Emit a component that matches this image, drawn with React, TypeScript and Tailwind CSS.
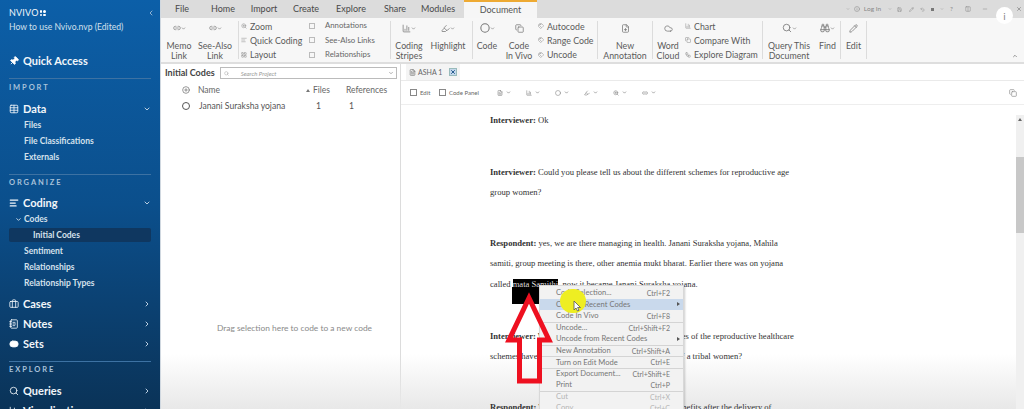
import React from "react";
import { ChevronDown, ChevronRight, ChevronLeft, ChevronUp, Pin, Table, AlignLeft, Briefcase, NotebookText, ToggleRight, Search, Pencil, Highlighter, Circle, FileText, FilePlus, Cloud, Binoculars, Copy, Link2, BarChart3, ZoomIn, LayoutGrid, Save, Undo2, Minus, X, CirclePlus, Info, Workflow, Tags, Columns2 } from "lucide-react";

const sans = "font-['Lato','Open_Sans',sans-serif]";

function SideHead({ t, pt, pb }: { t: string; pt: string; pb: string }) {
  return (
    <div className={`mx-[9px] border-t border-[#3d72a3] ${pt} ${pb} text-[7.5px] font-bold tracking-[1.9px] text-[#a9c2da] leading-[10px]`}>{t}</div>
  );
}
function SideMain({ icon, t, open }: { icon: React.ReactNode; t: string; open?: boolean }) {
  return (
    <div className="flex items-center h-[20px] pl-[9px] pr-[9px] text-[#f2f6fa] text-[11px] font-bold">
      <span className="w-[14px] flex">{icon}</span>
      <span className="flex-1">{t}</span>
      {open ? <ChevronDown size={8} strokeWidth={3} className="text-[#b9cde0]" /> : <ChevronRight size={8} strokeWidth={3} className="text-[#b9cde0]" />}
    </div>
  );
}
function SideSub({ t, first }: { t: string; first?: boolean }) {
  return <div className={`h-[16px] pl-[24px] text-[8.5px] font-bold leading-[16px] text-[#d5e1ec] ${first ? "-mt-[2px]" : ""}`}>{t}</div>;
}
function Tab({ t, w }: { t: string; w: string }) {
  return <div className={`${w} text-center text-[9px] leading-[18px] text-[#4a4a4a]`}>{t}</div>;
}
function Big({ icon, a, b, w, caret = true }: { icon: React.ReactNode; a: string; b?: string; w: string; caret?: boolean }) {
  return (
    <div className={`${w} shrink-0 flex flex-col items-center text-[8.8px] leading-[10px] text-[#5a5a5a] whitespace-nowrap`}>
      <div className="h-[23px] pb-[3px] flex items-center text-[#777]">{icon}{caret && <ChevronDown size={5} strokeWidth={3} />}</div>
      <div className="h-[10px]">{a}</div>
      <div className="h-[10px]">{b}</div>
    </div>
  );
}
function Small({ icon, t }: { icon: React.ReactNode; t: string }) {
  return <div className="flex items-center gap-[2px] h-[14.3px] text-[8.8px] whitespace-nowrap text-[#5a5a5a]"><span className="text-[#8a8a8a] flex w-[7px]">{icon}</span>{t}</div>;
}
function Check({ t }: { t: string }) {
  return <div className="flex items-center gap-[10px] h-[14.3px] text-[7.8px] whitespace-nowrap text-[#666]"><span className="w-[6px] h-[6px] border border-[#bbb]" />{t}</div>;
}
const Sep = () => <div className="w-px h-[38px] mt-[3px] shrink-0 bg-[#dcdcdc]" />;

function Tool({ icon }: { icon: React.ReactNode }) {
  return <div className="flex items-center gap-[3px] text-[#777]">{icon}<ChevronDown size={5} strokeWidth={3} /></div>;
}

function Item({ t, k, dim, arrow, active, line }: { t: string; k?: string; dim?: boolean; arrow?: boolean; active?: boolean; line?: boolean }) {
  return (
    <div className={`relative flex items-center justify-between h-[11.5px] pl-[16px] pr-[13px] text-[7.6px] whitespace-nowrap ${active ? "bg-[#c9d9ec]" : ""} ${line ? "border-t border-[#d4d4d4]" : ""} ${dim ? "text-[#b5b5b5]" : "text-[#777]"}`}>
      <span>{t}</span>
      <span className="text-[7px]">{k}</span>
      {arrow && <span className="absolute right-[3px] w-0 h-0 border-y-[2px] border-y-transparent border-l-[3px] border-l-[#555]" />}
    </div>
  );
}

export default function App() {
  return (
    <div className={`relative flex w-[1024px] h-[409px] overflow-hidden bg-white ${sans}`}>
      <aside className="w-[161px] shrink-0 h-full overflow-hidden bg-gradient-to-b from-[#0c5fa8] via-[#0b4f8c] to-[#0a3358] border-r border-[#d0d8e0]">
        <div className="flex items-center justify-between pl-[9px] pr-[5px] pt-[7px] h-[19px]">
          <div className="flex items-center text-[#f2f6fa] text-[9px] tracking-[0.2px] leading-[10px]">NVIVO
            <span className="ml-[1px] grid grid-cols-2 gap-[1px]">
              <span className="w-[2.5px] h-[2.5px] bg-white rounded-full" /><span className="w-[2.5px] h-[2.5px] bg-white rounded-full" />
              <span className="w-[2.5px] h-[2.5px] bg-white rounded-full" /><span className="w-[2.5px] h-[2.5px] bg-white rounded-full" />
            </span>
          </div>
          <ChevronLeft size={8} strokeWidth={2.5} className="text-[#a9c2da]" />
        </div>
        <div className="pl-[9px] mt-[2px] h-[30px] text-[8.6px] leading-[12px] text-[#d3e0ec]">How to use Nvivo.nvp (Edited)</div>
        <div className="flex items-center h-[20px] pl-[9px] text-[#f2f6fa] text-[11px] font-bold"><Pin size={10} fill="white" className="rotate-45 mr-[4px]" />Quick Access</div>
        <div className="h-[7px]" />
        <SideHead t="IMPORT" pt="pt-[4px]" pb="pb-[6px]" />
        <SideMain icon={<Table size={10} />} t="Data" open />
        <SideSub t="Files" first />
        <SideSub t="File Classifications" />
        <SideSub t="Externals" />
        <div className="h-[9px]" />
        <SideHead t="ORGANIZE" pt="pt-[3px]" pb="pb-[5px]" />
        <SideMain icon={<AlignLeft size={10} strokeWidth={3} />} t="Coding" open />
        <div className="flex items-center h-[16px] -mt-[2px] pl-[15px] text-[8.5px] font-bold text-[#d5e1ec]"><ChevronDown size={7} strokeWidth={3} className="mr-[2px]" />Codes</div>
        <div className="flex items-center h-[16px] mx-[9px] pl-[24px]">
          <div className="-ml-[24px] pl-[24px] w-[144px] h-[14px] rounded-[2px] bg-[#0f3760] text-[8.5px] font-bold leading-[14px] text-[#d5e1ec]">Initial Codes</div>
        </div>
        <SideSub t="Sentiment" />
        <SideSub t="Relationships" />
        <SideSub t="Relationship Types" />
        <div className="h-[3px]" />
        <SideMain icon={<Briefcase size={10} />} t="Cases" />
        <SideMain icon={<NotebookText size={10} />} t="Notes" />
        <SideMain icon={<ToggleRight size={10} fill="white" />} t="Sets" />
        <div className="h-[7px]" />
        <SideHead t="EXPLORE" pt="pt-[3px]" pb="pb-[6px]" />
        <SideMain icon={<Search size={10} />} t="Queries" />
        <SideMain icon={<BarChart3 size={10} />} t="Visualizations" />
      </aside>

      <main className="relative flex-1 min-w-0 flex flex-col">
        <div className="flex items-center h-[18px] bg-[#dcdcdc] pl-[1px]">
          <Tab t="File" w="w-[40px]" />
          <Tab t="Home" w="w-[42px]" />
          <Tab t="Import" w="w-[40px]" />
          <Tab t="Create" w="w-[44px]" />
          <Tab t="Explore" w="w-[46px]" />
          <Tab t="Share" w="w-[42px]" />
          <Tab t="Modules" w="w-[44px]" />
          <div className="ml-[4px] w-[73px] h-[18px] bg-[#f6f6f6] border-t-[2px] border-[#eeaa33] text-center text-[9px] leading-[15px] text-[#555]">Document</div>
          <div className="ml-auto flex items-center pr-[2px] text-[#888] text-[6.5px]">
            <ChevronDown size={4} />
            <Info size={6} className="ml-[4px]" />
            <span className="ml-[4px]">Log In</span>
            <ChevronDown size={4} className="ml-[7px]" />
            <Save size={5} className="ml-[5px]" />
            <Pencil size={5} className="ml-[7px]" />
            <Undo2 size={5} className="ml-[6px]" />
            <span className="ml-[6px] w-[3px] h-[3px] bg-[#777]" />
            <ChevronDown size={4} className="ml-[6px]" />
            <span className="ml-[6px]">?</span>
            <Columns2 size={6} className="ml-[12px]" />
            <Minus size={6} className="ml-[11px]" />
            <span className="w-[28px]" />
            <X size={6} strokeWidth={3} />
          </div>
        </div>

        <div className="relative flex h-[44px] bg-[#f7f7f7]">
          <Big w="w-[36px]" icon={<Link2 size={8} />} a="Memo" b="Link" />
          <Big w="w-[36px]" icon={<Link2 size={8} />} a="See-Also" b="Link" />
          <div className="w-[5px] shrink-0" />
          <Sep />
          <div className="w-[70px] shrink-0 pl-[2px] pt-[1px]">
            <Small icon={<ZoomIn size={6} />} t="Zoom" />
            <Small icon={<AlignLeft size={6} />} t="Quick Coding" />
            <Small icon={<LayoutGrid size={6} />} t="Layout" />
          </div>
          <div className="w-[81px] shrink-0 pt-[1px]">
            <Check t="Annotations" /><Check t="See-Also Links" /><Check t="Relationships" />
          </div>
          <Sep />
          <Big w="w-[36px]" icon={<BarChart3 size={9} />} a="Coding" b="Stripes" />
          <Big w="w-[42px]" icon={<Highlighter size={9} />} a="Highlight" />
          <div className="w-[3px] shrink-0" />
          <Sep />
          <Big w="w-[28px]" icon={<Circle size={10} strokeWidth={2.5} />} a="Code" />
          <Big w="w-[36px]" icon={<Copy size={9} />} a="Code" b="In Vivo" caret={false} />
          <div className="w-[60px] shrink-0 pl-[1px] pt-[1px]">
            <Small icon={<Tags size={6} />} t="Autocode" />
            <Small icon={<Tags size={6} />} t="Range Code" />
            <Small icon={<Tags size={6} />} t="Uncode" />
          </div>
          <Sep />
          <Big w="w-[54px]" icon={<FilePlus size={9} />} a="New" b="Annotation" caret={false} />
          <Sep />
          <Big w="w-[30px]" icon={<Cloud size={9} />} a="Word" b="Cloud" caret={false} />
          <div className="w-[79px] shrink-0 pl-[2px] pt-[1px]">
            <Small icon={<BarChart3 size={6} />} t="Chart" />
            <Small icon={<Copy size={6} />} t="Compare With" />
            <Small icon={<Workflow size={6} />} t="Explore Diagram" />
          </div>
          <Sep />
          <Big w="w-[52px]" icon={<Search size={10} />} a="Query This" b="Document" />
          <Big w="w-[25px]" icon={<Binoculars size={10} />} a="Find" />
          <Sep />
          <Big w="w-[25px]" icon={<Pencil size={9} />} a="Edit" caret={false} />
          <Sep />
          <ChevronUp size={6} strokeWidth={3} className="absolute right-[6px] bottom-[3px] text-[#777]" />
        </div>
        <div className="h-[2px] bg-[#dedede]" />

        <div className="flex-1 min-h-0 flex">
          <section className="w-[240px] shrink-0 border-r border-[#dcdcdc] flex flex-col">
            <div className="flex items-center h-[18px] pl-[4px] pr-[3px] gap-[5px]">
              <span className="text-[9px] font-bold text-[#444] whitespace-nowrap">Initial Codes</span>
              <div className="flex-1 h-[12px] border border-[#bbb] flex items-center pl-[3px] text-[#999]">
                <Search size={5} />
                <span className="ml-[12px] italic text-[6px]">Search Project</span>
                <ChevronDown size={6} className="ml-auto mr-[2px] text-[#666]" />
              </div>
            </div>
            <div className="flex items-center h-[14px] mt-[1px] text-[8.5px] text-[#666]">
              <CirclePlus size={8} className="ml-[21px]" />
              <span className="ml-[8px] w-[108px]">Name</span>
              <span className="w-[4px] h-0 border-x-[2px] border-x-transparent border-b-[3px] border-b-[#777] mr-[3px]" />
              <span className="w-[33px]">Files</span>
              <span>References</span>
            </div>
            <div className="flex items-center h-[18px] text-[8.6px] text-[#555]">
              <span className="ml-[21px] w-[8px] h-[8px] rounded-full border border-[#555]" />
              <span className="ml-[9px] w-[117px] whitespace-nowrap">Janani Suraksha yojana</span>
              <span className="w-[33px]">1</span>
              <span>1</span>
            </div>
            <div className="flex-1 flex items-center justify-center pt-[132px] pl-[28px] text-[8.4px] text-[#8a8a8a] whitespace-nowrap">Drag selection here to code to a new code</div>
          </section>

          <section className="relative flex-1 min-w-0 flex flex-col">
            <div className="flex items-end h-[17px] pl-[5px] border-b border-[#eaeaea]">
              <div className="flex items-center h-[16px] px-[3px] gap-[2px] bg-[#f4f4f4] text-[7px] text-[#666]">
                <FileText size={7} />ASHA 1
                <span className="ml-[5px] w-[8px] h-[8px] bg-[#c4d8ec] border border-[#9bb] flex items-center justify-center text-[#124a80]"><X size={6} strokeWidth={3.5} /></span>
              </div>
            </div>
            <div className="flex items-center h-[24px] pl-[9px] pr-[7px] border-b border-[#eeeeee] text-[6px] text-[#666]">
              <span className="w-[7px] h-[7px] border border-[#888] mr-[3px]" /><span className="w-[16px]">Edit</span>
              <span className="w-[7px] h-[7px] border border-[#888] mr-[3px] ml-[3px]" /><span className="w-[32px] whitespace-nowrap">Code Panel</span>
              <div className="flex items-center gap-[15px] ml-[16px]">
                <Tool icon={<FileText size={6} />} />
                <Tool icon={<BarChart3 size={6} />} />
                <Tool icon={<Circle size={6} />} />
                <Tool icon={<Highlighter size={6} />} />
                <Tool icon={<ZoomIn size={6} />} />
                <Tool icon={<Link2 size={6} />} />
              </div>
              <Copy size={8} className="ml-auto text-[#888]" />
            </div>
            <div className="relative z-[1] flex-1 min-h-0 overflow-hidden pl-[89px] pt-[5px] font-['Liberation_Serif',serif] text-[8.6px] leading-[20.2px] text-[#333] whitespace-nowrap">
              <p className="mb-[31.8px]"><b>Interviewer:</b> Ok</p>
              <p className="mb-[30.8px]"><b>Interviewer:</b> Could you please tell us about the different schemes for reproductive age<br />group women?</p>
              <p className="mb-[31.7px]"><b>Respondent:</b> yes, we are there managing in health. Janani Suraksha yojana, Mahila<br />samiti, group meeting is there, other anemia mukt bharat. Earlier there was on yojana<br />called <span className="bg-black text-[#ddd]">mata Samithi</span>, now it became Janani Suraksha yojana.</p>
              <p className="mb-[30.6px]"><b>Interviewer:</b> What is the overall impact of these schemes of the reproductive healthcare<br />schemes have had on the overall health and wellbeing of a tribal women?</p>
              <p><b>Respondent:</b> Women get financial support and other benefits after the delivery of</p>
            </div>

            <div className="absolute z-[2] right-0 top-[51px] bottom-0 w-[8px] bg-[#f0f0f0]">
              <div className="absolute left-[2px] top-[3px] w-0 h-0 border-x-[2px] border-x-transparent border-b-[3px] border-b-[#666]" />
              <div className="absolute left-0 top-[42px] w-[8px] h-[76px] bg-[#c8c8c8]" />
            </div>

            <div className="absolute z-10 left-[111px] top-[223px] w-[27px] h-[17px] bg-black" />

            <div className="absolute z-10 left-[138px] top-[221px] w-[145px] bg-[#f2f2f2] border border-[#d8d8d8] shadow-[1px_1px_2px_rgba(0,0,0,0.2)] pt-[1px]">
              <Item t="Code Selection..." k="Ctrl+F2" />
              <Item t="Code to Recent Codes" active arrow />
              <Item t="Code In Vivo" k="Ctrl+F8" />
              <Item t="Uncode..." k="Ctrl+Shift+F2" line />
              <Item t="Uncode from Recent Codes" arrow />
              <Item t="New Annotation" k="Ctrl+Shift+A" line />
              <Item t="Turn on Edit Mode" k="Ctrl+E" line />
              <Item t="Export Document..." k="Ctrl+Shift+E" line />
              <Item t="Print" k="Ctrl+P" />
              <Item t="Cut" k="Ctrl+X" dim line />
              <Item t="Copy" k="Ctrl+C" dim />
            </div>

            <div className="absolute z-10 left-[159px] top-[225px] w-[26px] h-[24px] rounded-full bg-[#eeee22]" />
            <svg className="absolute z-10 left-[172px] top-[236px]" width="8" height="12" viewBox="0 0 8 12"><path d="M1 1v9l2-2 1.5 3 1.5-.7L4.6 7.5H7.5z" fill="#fff" stroke="#555" strokeWidth="0.8" /></svg>
            <svg className="absolute z-10 left-[99px] top-[226px]" width="60" height="100" viewBox="0 0 60 100"><path d="M29 8 L49 50 L39.5 50 L39.5 91 L19.5 91 L19.5 50 L9 50 Z" fill="none" stroke="#ee1020" strokeWidth="5" /></svg>
          </section>
        </div>

        <div className="absolute left-0 right-0 bottom-0 h-[55px] bg-gradient-to-b from-transparent to-[#e8e8e8] pointer-events-none" />
        <div className="absolute right-[11px] top-[7px] w-[17px] h-[17px] rounded-full bg-white flex items-center justify-center text-[#888] text-[10px] leading-none">i</div>
      </main>
    </div>
  );
}
